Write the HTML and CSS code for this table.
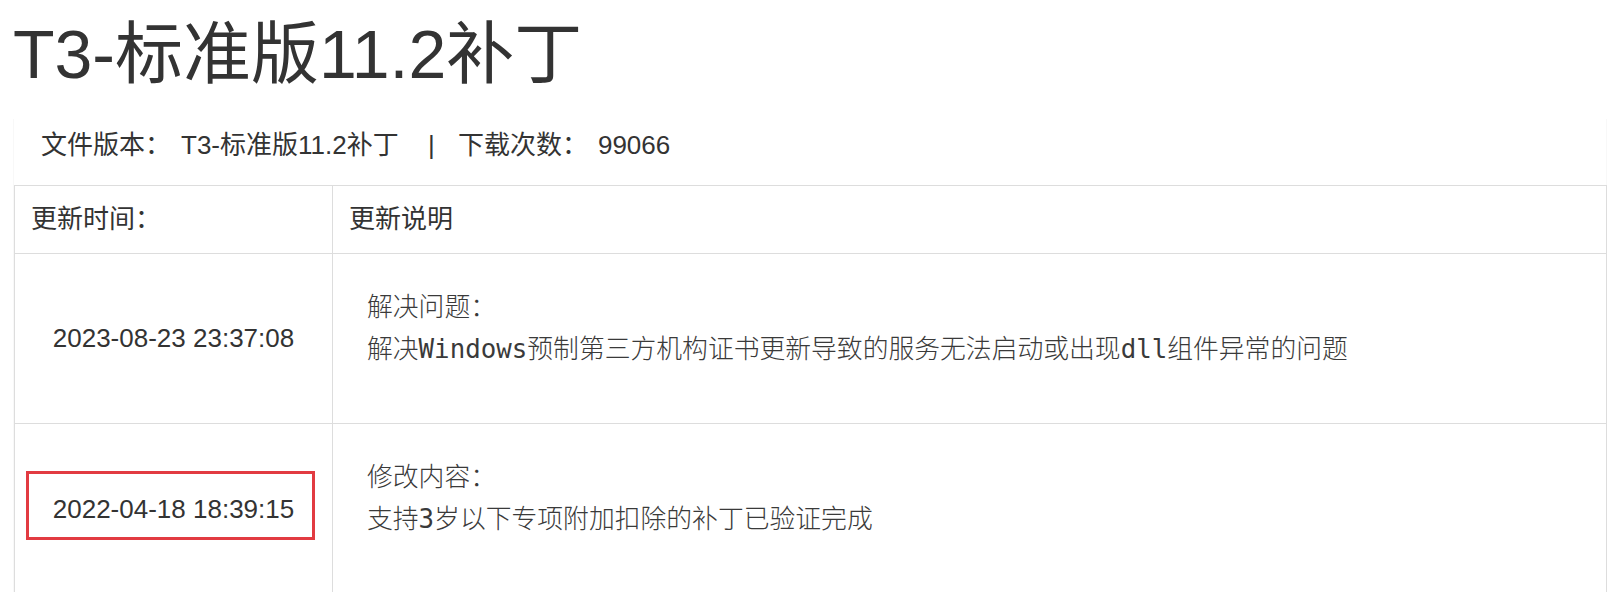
FILE: index.html
```html
<!DOCTYPE html>
<html lang="zh-CN">
<head>
    <meta charset="UTF-8">
    <meta name="viewport" content="width=device-width, initial-scale=1.0">
    <title>T3-标准版11.2补丁</title>
    <link rel="stylesheet" href="styles.css">
</head>
<body>

<div class="page">
    <h1 class="title">T3-标准版11.2补丁</h1>

    <div class="panel">
        <p class="meta">
            <span class="label">文件版本：</span><span class="value">T3-标准版11.2补丁</span>
            <span class="sep">|</span>
            <span class="label">下载次数：</span><span class="value">99066</span>
        </p>

        <table class="log">
            <thead>
            <tr>
                <th class="col-time">更新时间：</th>
                <th>更新说明</th>
            </tr>
            </thead>
            <tbody>
            <tr>
                <td class="time">2023-08-23 23:37:08</td>
                <td class="desc"><pre>解决问题：
解决Windows预制第三方机构证书更新导致的服务无法启动或出现dll组件异常的问题</pre></td>
            </tr>
            <tr>
                <td class="time"><span class="mark">2022-04-18 18:39:15</span></td>
                <td class="desc"><pre>修改内容：
支持3岁以下专项附加扣除的补丁已验证完成</pre></td>
            </tr>
            </tbody>
        </table>
    </div>
</div>

</body>
</html>
```

FILE: styles.css
```css
body { margin: 0; background: #fff; color: #333; font-family: "Liberation Sans", Arial, "Noto Sans CJK SC", sans-serif; }
.page { padding: 0 5px 0 13px; }
.title { margin: 17px 0 0; font-size: 68px; line-height: 1.1; font-weight: normal; }
.panel { margin-top: 27px; border: 1px solid #f8f8f8; border-top: none; border-bottom: none; }
.meta { margin: 0; padding: 8px 0 21px 27px; font-size: 26px; line-height: 37px; }
.meta .label { margin-right: 10px; }
.meta .sep { margin: 0 16px 0 22px; }
.log { width: calc(100% + 1px); border-collapse: collapse; font-size: 26px; }
.log th, .log td { border: 1px solid #ddd; text-align: left; }
.log th { padding: 15px 16px; line-height: 37px; font-weight: normal; }
.log .col-time { width: 285px; }
.log .time { text-align: center; vertical-align: middle; line-height: 37px; }
.log .desc { padding: 32px 16px 53px 34px; vertical-align: top; }
.log tr:last-child .desc { padding-bottom: 60px; }
.log tr:last-child .time { padding-bottom: 7px; }
.desc pre { margin: 0; font-family: "DejaVu Sans Mono", "Liberation Mono", "Noto Sans CJK SC", monospace; font-size: 25.8px; font-weight: 300; line-height: 42px; color: #3a3a3a; white-space: pre-wrap; }
.mark { display: inline-block; margin: 0 6px 6px 0; padding: 17px 18px 9px 24px; border: 3px solid #e23b41; }
```
